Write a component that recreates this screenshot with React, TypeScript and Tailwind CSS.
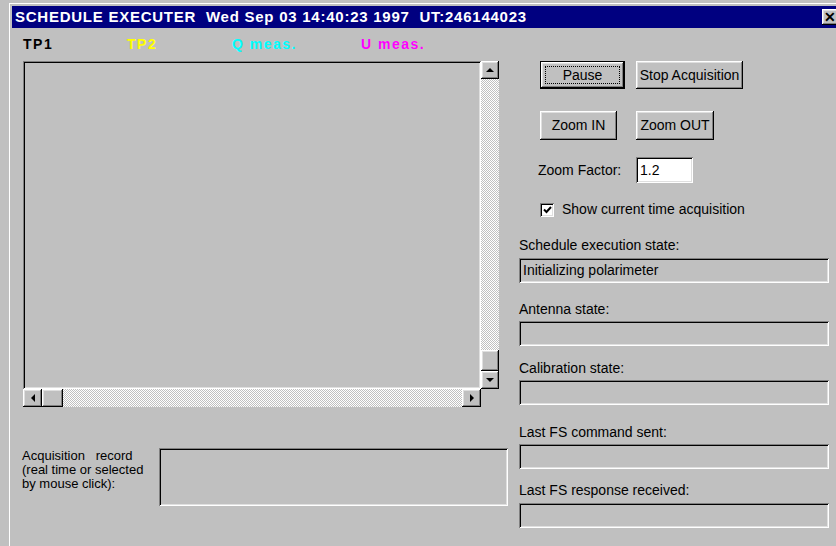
import React from "react";

const raised =
  "shadow-[inset_-1px_-1px_#000,inset_1px_1px_#fff,inset_-2px_-2px_#808080,inset_2px_2px_#dfdfdf]";
const sunken =
  "shadow-[inset_1px_1px_#808080,inset_-1px_-1px_#fff,inset_2px_2px_#000,inset_-2px_-2px_#dfdfdf]";
const stipple =
  "bg-[repeating-conic-gradient(#fff_0_25%,#c0c0c0_0_50%)] bg-[length:2px_2px]";

function Arrow({ dir }: { dir: "up" | "down" | "left" | "right" }) {
  if (dir === "up")
    return <div className="w-0 h-0 border-x-[4px] border-x-transparent border-b-[4px] border-b-black" />;
  if (dir === "down")
    return <div className="w-0 h-0 border-x-[4px] border-x-transparent border-t-[4px] border-t-black" />;
  if (dir === "left")
    return <div className="w-0 h-0 border-y-[4px] border-y-transparent border-r-[4px] border-r-black" />;
  return <div className="w-0 h-0 border-y-[4px] border-y-transparent border-l-[4px] border-l-black" />;
}

function Button({ label, className }: { label: string; className: string }) {
  return (
    <div className={`flex items-center justify-center bg-[#c0c0c0] ${raised} ${className}`}>
      {label}
    </div>
  );
}

function StateField({ label, value, labelTop, fieldTop }: { label: string; value?: string; labelTop: string; fieldTop: string }) {
  return (
    <>
      <div className={`${labelTop} h-[15px] leading-[15px]`}>{label}</div>
      <div className={`${fieldTop} w-[310px] h-[25px] flex items-center pl-[4px] ${sunken}`}>
        {value}
      </div>
    </>
  );
}

export default function App() {
  return (
    <div className="w-[836px] h-[546px] overflow-hidden bg-[#c0c0c0] text-black font-['Liberation_Sans',Arial,sans-serif]">
      <div className="ml-[9px] mt-[3px] w-[840px] h-[560px] border-l border-t border-white pl-[2px] pt-[2px]">
        {/* title bar */}
        <div className="h-[22px] w-[830px] bg-[#000080] flex items-center justify-between pl-[3px] pr-[4px]">
          <span className="text-white font-bold text-[15px] tracking-[0.75px] whitespace-pre">
            SCHEDULE EXECUTER  Wed Sep 03 14:40:23 1997  UT:246144023
          </span>
          <div className={`w-[16px] h-[16px] bg-[#c0c0c0] flex items-center justify-center text-[14px] font-bold leading-none ${raised}`}>
            ✕
          </div>
        </div>

        <div className="flex">
          {/* plot area */}
          <div className="w-[507px] pl-[11px] flex flex-col">
            <div className="h-[33px] flex items-center text-[14px] font-bold tracking-[1.5px]">
              <span className="w-[104px] text-black">TP1</span>
              <span className="w-[105px] text-[#ffff00]">TP2</span>
              <span className="w-[129px] text-[#00ffff]">Q meas.</span>
              <span className="text-[#ff00ff]">U meas.</span>
            </div>
            <div className="flex h-[328px]">
              <div className={`w-[458px] bg-[#c0c0c0] ${sunken}`} />
              <div className="w-[18px] flex flex-col">
                <div className={`h-[18px] flex items-center justify-center ${raised}`}>
                  <Arrow dir="up" />
                </div>
                <div className={`flex-1 ${stipple}`} />
                <div className={`h-[21px] ${raised}`} />
                <div className={`h-[18px] flex items-center justify-center ${raised}`}>
                  <Arrow dir="down" />
                </div>
              </div>
            </div>
            <div className="flex h-[18px] w-[458px]">
              <div className={`w-[19px] flex items-center justify-center ${raised}`}>
                <Arrow dir="left" />
              </div>
              <div className={`w-[21px] ${raised}`} />
              <div className={`flex-1 ${stipple}`} />
              <div className={`w-[19px] flex items-center justify-center ${raised}`}>
                <Arrow dir="right" />
              </div>
            </div>
            <div className="mt-[41px] flex">
              <div className="w-[137px] -ml-[1px] pt-[1px] text-[13px] leading-[14px] whitespace-pre">
                {"Acquisition   record\n(real time or selected\nby mouse click):"}
              </div>
              <div className={`w-[349px] h-[58px] ${sunken}`} />
            </div>
          </div>

          {/* controls */}
          <div className="flex-1 pt-[33px] text-[14px] flex flex-col">
            <div className="flex pl-[21px] gap-[11px]">
              <div className="w-[85px] h-[28px] border border-black">
                <div className={`w-full h-full p-[4px] ${raised}`}>
                  <div className="w-full h-full border border-dotted border-black flex items-center justify-center">
                    Pause
                  </div>
                </div>
              </div>
              <Button label="Stop Acquisition" className="w-[107px] h-[28px]" />
            </div>
            <div className="flex pl-[21px] gap-[19px] mt-[22px]">
              <Button label="Zoom IN" className="w-[77px] h-[29px]" />
              <Button label="Zoom OUT" className="w-[78px] h-[29px]" />
            </div>
            <div className="flex items-center pl-[19px] mt-[17px] h-[26px]">
              <span className="w-[98px]">Zoom Factor:</span>
              <div className={`w-[57px] h-[26px] bg-white flex items-center pl-[4px] ${sunken}`}>1.2</div>
            </div>
            <div className="flex items-center pl-[21px] mt-[19px] h-[15px] gap-[8px]">
              <div className={`w-[14px] h-[14px] bg-white flex items-center justify-center ${sunken}`}>
                <svg width="9" height="8" viewBox="0 0 9 8">
                  <path d="M1 3.5 L3.5 6 L8 1" stroke="#000" strokeWidth="2" fill="none" />
                </svg>
              </div>
              <span>Show current time acquisition</span>
            </div>
            <StateField label="Schedule execution state:" value="Initializing polarimeter" labelTop="mt-[21px]" fieldTop="mt-[5px]" />
            <StateField label="Antenna state:" labelTop="mt-[19px]" fieldTop="mt-[4px]" />
            <StateField label="Calibration state:" labelTop="mt-[15px]" fieldTop="mt-[4px]" />
            <StateField label="Last FS command sent:" labelTop="mt-[20px]" fieldTop="mt-[4px]" />
            <StateField label="Last FS response received:" labelTop="mt-[14px]" fieldTop="mt-[5px]" />
          </div>
        </div>
      </div>
    </div>
  );
}
